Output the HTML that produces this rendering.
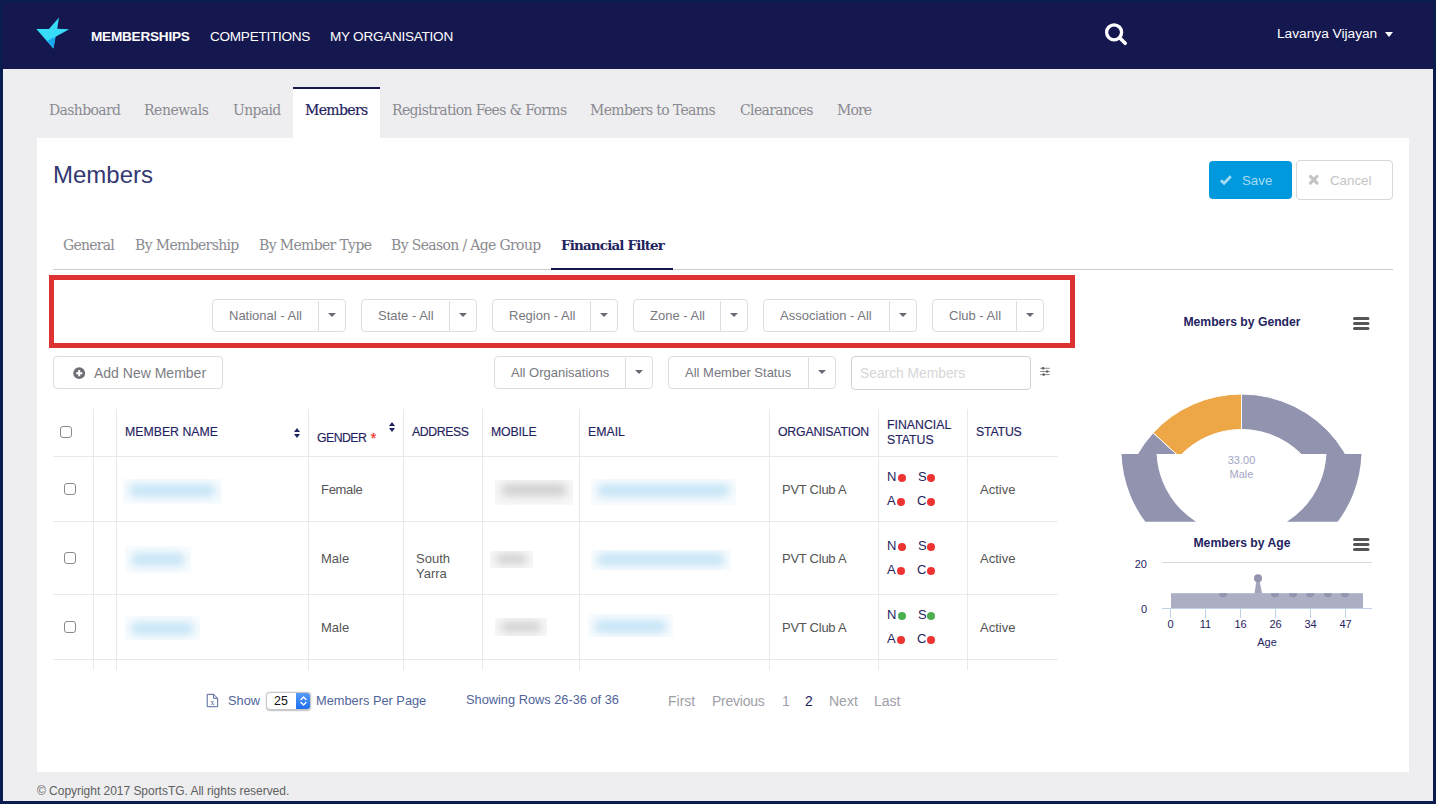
<!DOCTYPE html>
<html lang="en">
<head>
<meta charset="utf-8">
<title>Members</title>
<style>
*{box-sizing:border-box;margin:0;padding:0}
html,body{width:1436px;height:804px;overflow:hidden}
body{background:#eeeef0;font-family:"Liberation Sans",sans-serif;font-size:13px;color:#555;position:relative}
.abs{position:absolute}
#frame{position:absolute;left:0;top:0;width:1436px;height:804px;border:3px solid #0a1b4d;z-index:20;pointer-events:none}
#header{position:absolute;left:0;top:0;width:1436px;height:69px;background:#15184f}
.nav{position:absolute;top:29px;line-height:16px;font-size:13.6px;letter-spacing:-.28px;color:#fff;white-space:nowrap}
.tab{position:absolute;top:100px;line-height:20px;font-family:"DejaVu Serif","Liberation Serif",serif;font-size:14px;letter-spacing:-.65px;color:#8a8a90;white-space:nowrap}
#panel{position:absolute;left:37px;top:138px;width:1372px;height:634px;background:#fff}
.subtab{position:absolute;top:235px;line-height:20px;font-family:"DejaVu Serif","Liberation Serif",serif;font-size:14px;letter-spacing:-.65px;color:#8a8a90;white-space:nowrap}
.dd{position:absolute;height:33px;border:1px solid #ddd;border-radius:4px;background:#fff;color:#787880;font-size:13px;line-height:31px;white-space:nowrap}
.dd span{position:absolute;left:16px;top:0}
.dd i{position:absolute;right:26px;top:1px;bottom:0;width:1px;background:#ddd}
.dd b{position:absolute;right:9.3px;top:13.4px;width:0;height:0;border-left:4px solid transparent;border-right:4px solid transparent;border-top:4px solid #6a6a74}
/* table */
#tbl{position:absolute;left:53px;top:409px;width:1005px;height:261px;overflow:hidden}
#tbl .v{position:absolute;top:0;width:1px;height:261px;background:#e9e9e9}
#tbl .h{position:absolute;left:0;width:1005px;height:1px;background:#e9e9e9}
#tbl .th{position:absolute;font-size:12.3px;line-height:15px;color:#1f2460;white-space:nowrap;-webkit-text-stroke:.15px #1f2460}
#tbl .td{position:absolute;font-size:13px;line-height:15px;color:#555;white-space:nowrap}
#tbl .fs{position:absolute;font-size:13px;line-height:15px;color:#1f2460}
.dot{position:absolute;width:8px;height:8px;border-radius:50%;background:#ee3333}
.dot.g{background:#4caf50}
.cb{position:absolute;width:12px;height:12px;border:1px solid #8a8a8a;border-radius:3px;background:#fff}
.bz{position:absolute;overflow:hidden}
.bz.b{background:rgba(190,225,246,.10)}
.bz.g{background:rgba(0,0,0,.03)}
.blur{position:absolute;filter:blur(4px);border-radius:6px}
.bl{background:#c6e4f6}
.gr{background:#cfcfcf}
.sort{position:absolute;width:6px;height:10px}
.sort:before,.sort:after{content:"";position:absolute;left:0;width:0;height:0;border-left:3px solid transparent;border-right:3px solid transparent}
.sort:before{top:0;border-bottom:4px solid #1f2460}
.sort:after{bottom:0;border-top:4px solid #1f2460}
.pg{position:absolute;top:693px;line-height:16px;font-size:14px;color:#a0a0a8;white-space:nowrap}
.ct{font-family:"Liberation Sans",sans-serif}
</style>
</head>
<body>
<div id="header">
  <svg class="abs" style="left:35px;top:16px" width="36" height="36" viewBox="0 0 36 36"><polygon points="24.03,1.46 22.24,12.8 34.17,13.2 20.57,20.85 18.36,32.5 1.35,12.97 13.88,12.97" fill="#38dcf8"/><polygon points="20.57,20.85 18.36,32.5 11.97,24.7" fill="#1aa9f0"/></svg>
  <div class="nav" style="left:91px;font-weight:700;letter-spacing:-.24px">MEMBERSHIPS</div>
  <div class="nav" style="left:210px">COMPETITIONS</div>
  <div class="nav" style="left:330px">MY ORGANISATION</div>
  <svg class="abs" style="left:1103px;top:22px" width="26" height="26" viewBox="0 0 26 26"><circle cx="11.1" cy="10.3" r="7.5" fill="none" stroke="#fff" stroke-width="3.3"/><path d="M16.6 15.8 L22.2 21.3" stroke="#fff" stroke-width="3.6" stroke-linecap="round"/></svg>
  <div class="nav" style="left:1277px;top:26px;font-size:13.7px;letter-spacing:0">Lavanya Vijayan</div>
  <div class="abs" style="left:1384.5px;top:31.5px;width:0;height:0;border-left:4.5px solid transparent;border-right:4.5px solid transparent;border-top:5px solid #fff"></div>
</div>

<div class="abs" style="left:293px;top:87px;width:87px;height:52px;background:#fff;border-top:2px solid #15184f"></div>
<div class="tab" style="left:49px">Dashboard</div>
<div class="tab" style="left:144px;letter-spacing:-.45px">Renewals</div>
<div class="tab" style="left:233px">Unpaid</div>
<div class="tab" style="left:305px;color:#1f2460;-webkit-text-stroke:.2px #1f2460">Members</div>
<div class="tab" style="left:392px">Registration Fees &amp; Forms</div>
<div class="tab" style="left:590px">Members to Teams</div>
<div class="tab" style="left:740px">Clearances</div>
<div class="tab" style="left:837px;letter-spacing:-.9px">More</div>

<div id="panel"></div>
<h1 class="abs" style="left:53px;top:159px;font-size:24px;line-height:32px;font-weight:400;color:#343973">Members</h1>

<div class="abs" style="left:1209px;top:161px;width:83px;height:38px;background:#0099dd;border-radius:4px;color:#a6dbf3;font-size:13.3px;line-height:40px"><svg class="abs" style="left:10px;top:12.2px" width="14" height="13" viewBox="0 0 14 13"><path d="M1.9 7.2L5.1 10.3L11.8 3.3" fill="none" stroke="#a6dbf3" stroke-width="2.7" stroke-linejoin="miter"/></svg><span class="abs" style="left:33px">Save</span></div>
<div class="abs" style="left:1296px;top:160px;width:97px;height:40px;background:#fff;border:1px solid #d8d8d8;border-radius:4px;color:#c4c4c4;font-size:13.3px;line-height:40px"><svg class="abs" style="left:10.8px;top:13.2px" width="12" height="12" viewBox="0 0 12 12"><path d="M2.4 2.4L9.1 9.1M9.1 2.4L2.4 9.1" fill="none" stroke="#c4c4c4" stroke-width="3" stroke-linecap="round"/></svg><span class="abs" style="left:33px">Cancel</span></div>

<div class="subtab" style="left:63px;letter-spacing:-.75px">General</div>
<div class="subtab" style="left:135px">By Membership</div>
<div class="subtab" style="left:259px">By Member Type</div>
<div class="subtab" style="left:391px">By Season / Age Group</div>
<div class="subtab" style="left:561px;color:#1f2460;font-weight:700;font-size:13.5px;letter-spacing:-.86px">Financial Filter</div>
<div class="abs" style="left:53px;top:269px;width:1340px;height:1px;background:#ccc"></div>
<div class="abs" style="left:551px;top:268px;width:122px;height:2px;background:#15184f"></div>

<div class="abs" style="left:49px;top:275px;width:1026px;height:73px;border:5px solid #dc3232"></div>

<div class="dd" style="left:212px;top:299px;width:134px"><span>National - All</span><i></i><b></b></div>
<div class="dd" style="left:361px;top:299px;width:116px"><span>State - All</span><i></i><b></b></div>
<div class="dd" style="left:492px;top:299px;width:126px"><span>Region - All</span><i></i><b></b></div>
<div class="dd" style="left:633px;top:299px;width:115px"><span>Zone - All</span><i></i><b></b></div>
<div class="dd" style="left:763px;top:299px;width:154px"><span>Association - All</span><i></i><b></b></div>
<div class="dd" style="left:932px;top:299px;width:112px"><span>Club - All</span><i></i><b></b></div>

<div class="dd" style="left:53px;top:356px;width:170px;font-size:14px;color:#7d7d85"><svg class="abs" style="left:19px;top:9.6px" width="13" height="13" viewBox="0 0 13 13"><circle cx="6.2" cy="6.2" r="5.9" fill="#6e6e76"/><path d="M3.1 6.2H9.3M6.2 3.1V9.3" stroke="#fff" stroke-width="2"/></svg><span style="left:40px;top:.6px">Add New Member</span></div>
<div class="dd" style="left:494px;top:356px;width:159px"><span>All Organisations</span><i></i><b></b></div>
<div class="dd" style="left:668px;top:356px;width:168px"><span>All Member Status</span><i></i><b></b></div>
<div class="dd" style="left:851px;top:356px;width:180px;height:34px;border-color:#d2d2d2;color:#d6d6d6;font-size:13.8px"><span style="left:8px;top:1px">Search Members</span></div>
<svg class="abs" style="left:1039px;top:365px" width="12" height="12" viewBox="0 0 12 12"><path d="M1.2 3.3H10.8M1.2 6.5H10.8M1.2 9.6H10.8" stroke="#8c8c8c" stroke-width="1"/><circle cx="4.1" cy="3.3" r="1.35" fill="#666"/><circle cx="8.1" cy="6.5" r="1.35" fill="#666"/><circle cx="4.7" cy="9.6" r="1.35" fill="#666"/></svg>

<div id="tbl">
  <div class="v" style="left:40px"></div><div class="v" style="left:63px"></div><div class="v" style="left:255px"></div><div class="v" style="left:350px"></div><div class="v" style="left:429px"></div><div class="v" style="left:526px"></div><div class="v" style="left:716px"></div><div class="v" style="left:825px"></div><div class="v" style="left:914px"></div>
  <div class="h" style="top:47px"></div><div class="h" style="top:112px"></div><div class="h" style="top:185px"></div><div class="h" style="top:250px"></div>
  <div class="cb" style="left:7px;top:17px"></div>
  <div class="th" style="left:72px;top:16px">MEMBER NAME</div><div class="sort" style="left:241px;top:19px"></div>
  <div class="th" style="left:264px;top:22px;letter-spacing:-.55px">GENDER <span style="color:#ee3333;font-size:14px;line-height:0;margin-left:1.5px;position:relative;top:1px;-webkit-text-stroke:.3px #ee3333">*</span></div><div class="sort" style="left:336px;top:13px"></div>
  <div class="th" style="left:359px;top:16px;letter-spacing:-.4px">ADDRESS</div>
  <div class="th" style="left:438px;top:16px;letter-spacing:-.15px">MOBILE</div>
  <div class="th" style="left:535px;top:16px">EMAIL</div>
  <div class="th" style="left:725px;top:16px;letter-spacing:-.2px">ORGANISATION</div>
  <div class="th" style="left:834px;top:9px;line-height:14.7px">FINANCIAL<br>STATUS</div>
  <div class="th" style="left:923px;top:16px;letter-spacing:-.18px">STATUS</div>

  <div class="cb" style="left:11px;top:74px"></div>
  <div class="td" style="left:268px;top:73px;letter-spacing:-.3px">Female</div>
  <div class="td" style="left:729px;top:73px;letter-spacing:-.26px">PVT Club A</div>
  <div class="fs" style="left:834px;top:60px">N</div><div class="dot" style="left:845px;top:65px"></div><div class="fs" style="left:865px;top:60px">S</div><div class="dot" style="left:874px;top:65px"></div>
  <div class="fs" style="left:834px;top:84px">A</div><div class="dot" style="left:844px;top:89px"></div><div class="fs" style="left:864px;top:84px">C</div><div class="dot" style="left:874px;top:89px"></div>
  <div class="td" style="left:927px;top:73px">Active</div>

  <div class="cb" style="left:11px;top:143px"></div>
  <div class="td" style="left:268px;top:142px">Male</div>
  <div class="td" style="left:363px;top:142px">South<br>Yarra</div>
  <div class="td" style="left:729px;top:142px;letter-spacing:-.26px">PVT Club A</div>
  <div class="fs" style="left:834px;top:129px">N</div><div class="dot" style="left:845px;top:134px"></div><div class="fs" style="left:865px;top:129px">S</div><div class="dot" style="left:874px;top:134px"></div>
  <div class="fs" style="left:834px;top:153px">A</div><div class="dot" style="left:844px;top:158px"></div><div class="fs" style="left:864px;top:153px">C</div><div class="dot" style="left:874px;top:158px"></div>
  <div class="td" style="left:927px;top:142px">Active</div>

  <div class="cb" style="left:11px;top:212px"></div>
  <div class="td" style="left:268px;top:211px">Male</div>
  <div class="td" style="left:729px;top:211px;letter-spacing:-.26px">PVT Club A</div>
  <div class="fs" style="left:834px;top:198px">N</div><div class="dot g" style="left:845px;top:203px"></div><div class="fs" style="left:865px;top:198px">S</div><div class="dot g" style="left:874px;top:203px"></div>
  <div class="fs" style="left:834px;top:222px">A</div><div class="dot" style="left:844px;top:227px"></div><div class="fs" style="left:864px;top:222px">C</div><div class="dot" style="left:874px;top:227px"></div>
  <div class="td" style="left:927px;top:211px">Active</div>

  <div class="bz b" style="left:70px;top:70px;width:99px;height:25px"><div class="blur bl" style="left:6px;top:4.5px;width:87px;height:13.0px"></div></div>
  <div class="bz b" style="left:72px;top:137px;width:66px;height:27px"><div class="blur bl" style="left:6px;top:6.5px;width:54px;height:13.0px"></div></div>
  <div class="bz b" style="left:72px;top:207px;width:75px;height:24px"><div class="blur bl" style="left:6px;top:5.5px;width:63px;height:13.0px"></div></div>
  <div class="bz g" style="left:442px;top:71px;width:78px;height:25px"><div class="blur gr" style="left:6px;top:3.5px;width:66px;height:12.0px"></div></div>
  <div class="bz g" style="left:437px;top:142px;width:43px;height:17px"><div class="blur gr" style="left:6px;top:2.5px;width:31px;height:10.0px"></div></div>
  <div class="bz g" style="left:442px;top:209px;width:52px;height:18px"><div class="blur gr" style="left:6px;top:4.0px;width:40px;height:10.0px"></div></div>
  <div class="bz b" style="left:538px;top:70px;width:145px;height:26px"><div class="blur bl" style="left:6px;top:4.5px;width:133px;height:13.0px"></div></div>
  <div class="bz b" style="left:538px;top:141px;width:140px;height:20px"><div class="blur bl" style="left:6px;top:3.0px;width:128px;height:13.0px"></div></div>
  <div class="bz b" style="left:535px;top:205px;width:85px;height:23px"><div class="blur bl" style="left:6px;top:6.0px;width:73px;height:13.0px"></div></div>
</div>
<!--TABLE_END-->
<svg class="abs" style="left:206px;top:693px" width="13" height="15" viewBox="0 0 13 15"><path d="M1.2 1.3H7.6L11.7 5.3V13.7H1.2Z M7.6 1.3V5.3H11.7" fill="none" stroke="#50649a" stroke-width="1"/><text x="6.4" y="12" text-anchor="middle" font-family="Liberation Serif, serif" font-size="8.5" fill="#50649a">x</text></svg>
<div class="pg" style="left:228px;color:#50649a;font-size:12.8px">Show</div>
<div class="abs" style="left:266px;top:692px;width:45px;height:18px;border:1px solid #c6c6c6;border-radius:4px;background:#fff;overflow:hidden;box-shadow:0 .5px 1.5px rgba(0,0,0,.25)"><span class="abs" style="left:7px;top:-.5px;font-size:12.4px;line-height:17px;color:#111">25</span><span class="abs" style="right:-1px;top:-1px;width:15px;height:18px;background:linear-gradient(#5a9df9,#1b6cf2);border-radius:0 4px 4px 0"></span><svg class="abs" style="right:2px;top:2px" width="9" height="12" viewBox="0 0 9 12"><path d="M2 4.5L4.5 2L7 4.5M2 7.5L4.5 10L7 7.5" fill="none" stroke="#fff" stroke-width="1.4" stroke-linecap="round" stroke-linejoin="round"/></svg></div>
<div class="pg" style="left:316px;color:#50649a;font-size:12.8px">Members Per Page</div>
<div class="pg" style="left:466px;top:692px;color:#50649a;font-size:12.8px">Showing Rows 26-36 of 36</div>
<div class="pg" style="left:668px">First</div>
<div class="pg" style="left:712px;letter-spacing:-.25px">Previous</div>
<div class="pg" style="left:782px">1</div>
<div class="pg" style="left:805px;color:#1f2460">2</div>
<div class="pg" style="left:829px">Next</div>
<div class="pg" style="left:874px">Last</div>
<!--PAGER_END-->
<div class="abs ct" style="left:1142px;top:314px;width:200px;text-align:center;font-size:12.2px;line-height:16px;font-weight:700;color:#1f2460">Members by Gender</div>
<div class="abs ct" style="left:1142px;top:535px;width:200px;text-align:center;font-size:12.2px;line-height:16px;font-weight:700;color:#1f2460">Members by Age</div>
<svg class="abs" style="left:1090px;top:290px" width="320" height="380" viewBox="1090 290 320 380">
  <defs>
    <clipPath id="cu"><rect x="1090" y="290" width="320" height="164"/></clipPath>
    <clipPath id="cl"><rect x="1090" y="454" width="320" height="67.8"/></clipPath>
    <clipPath id="ca"><rect x="1171" y="593.2" width="192" height="15"/></clipPath>
  </defs>
  <g stroke="#555" stroke-width="3" stroke-linecap="round">
    <path d="M1354.5 318.5H1368M1354.5 323.5H1368M1354.5 328.5H1368"/>
    <path d="M1354.5 539.5H1368M1354.5 544.5H1368M1354.5 549.5H1368"/>
  </g>
  <g clip-path="url(#cu)" stroke="#fff" stroke-width="1" stroke-linejoin="round">
    <path d="M1241.5 394A120 120 0 1 1 1153.17 432.77L1179.3 456.8A84.5 84.5 0 1 0 1241.5 429.5Z" fill="#9193af"/>
    <path d="M1153.17 432.77A120 120 0 0 1 1241.5 394L1241.5 429.5A84.5 84.5 0 0 0 1179.3 456.8Z" fill="#eda747"/>
  </g>
  <g clip-path="url(#cl)">
    <circle cx="1241.5" cy="450" r="102.5" fill="none" stroke="#9193af" stroke-width="35"/>
  </g>
  <text x="1241.5" y="464" text-anchor="middle" font-family="Liberation Sans, sans-serif" font-size="11" fill="#a3a5c3">33.00</text>
  <text x="1241.5" y="478" text-anchor="middle" font-family="Liberation Sans, sans-serif" font-size="11" fill="#a3a5c3">Male</text>

  <path d="M1162 562.5H1372" stroke="#d8d8d8" stroke-width="1"/>
  <path d="M1162 608.5H1372" stroke="#c0d0e6" stroke-width="1"/>
  <path d="M1170.5 608V618M1205.5 608V618M1240.5 608V618M1275.5 608V618M1310.5 608V618M1345.5 608V618" stroke="#c0d0e6" stroke-width="1"/>
  <rect x="1171" y="593.2" width="192" height="14.8" fill="#acaec4"/>
  <polygon points="1254.4,593.4 1256.6,580 1259.4,580 1262.1,593.4" fill="#a3a5bd"/>
  <circle cx="1258" cy="578.2" r="4" fill="#9193af"/>
  <g clip-path="url(#ca)" fill="#9193af">
    <circle cx="1223" cy="593.2" r="4"/><circle cx="1275" cy="593.2" r="4"/><circle cx="1293" cy="593.2" r="4"/><circle cx="1310.2" cy="593.2" r="4"/><circle cx="1327.8" cy="593.2" r="4"/><circle cx="1345" cy="593.2" r="4"/>
  </g>
  <g font-family="Liberation Sans, sans-serif" font-size="11" fill="#1f2460">
    <text x="1147" y="568" text-anchor="end">20</text>
    <text x="1147" y="613" text-anchor="end">0</text>
    <text x="1170.5" y="627.5" text-anchor="middle">0</text>
    <text x="1205.5" y="627.5" text-anchor="middle">11</text>
    <text x="1240.5" y="627.5" text-anchor="middle">16</text>
    <text x="1275.5" y="627.5" text-anchor="middle">26</text>
    <text x="1310.5" y="627.5" text-anchor="middle">34</text>
    <text x="1345.5" y="627.5" text-anchor="middle">47</text>
    <text x="1267" y="646" text-anchor="middle">Age</text>
  </g>
</svg>
<!--CHARTS_END-->
<div class="abs" style="left:37px;top:784px;font-size:12px;letter-spacing:-.03px;line-height:14px;color:#606060">© Copyright 2017 SportsTG. All rights reserved.</div>
<div id="frame"></div>
</body>
</html>
